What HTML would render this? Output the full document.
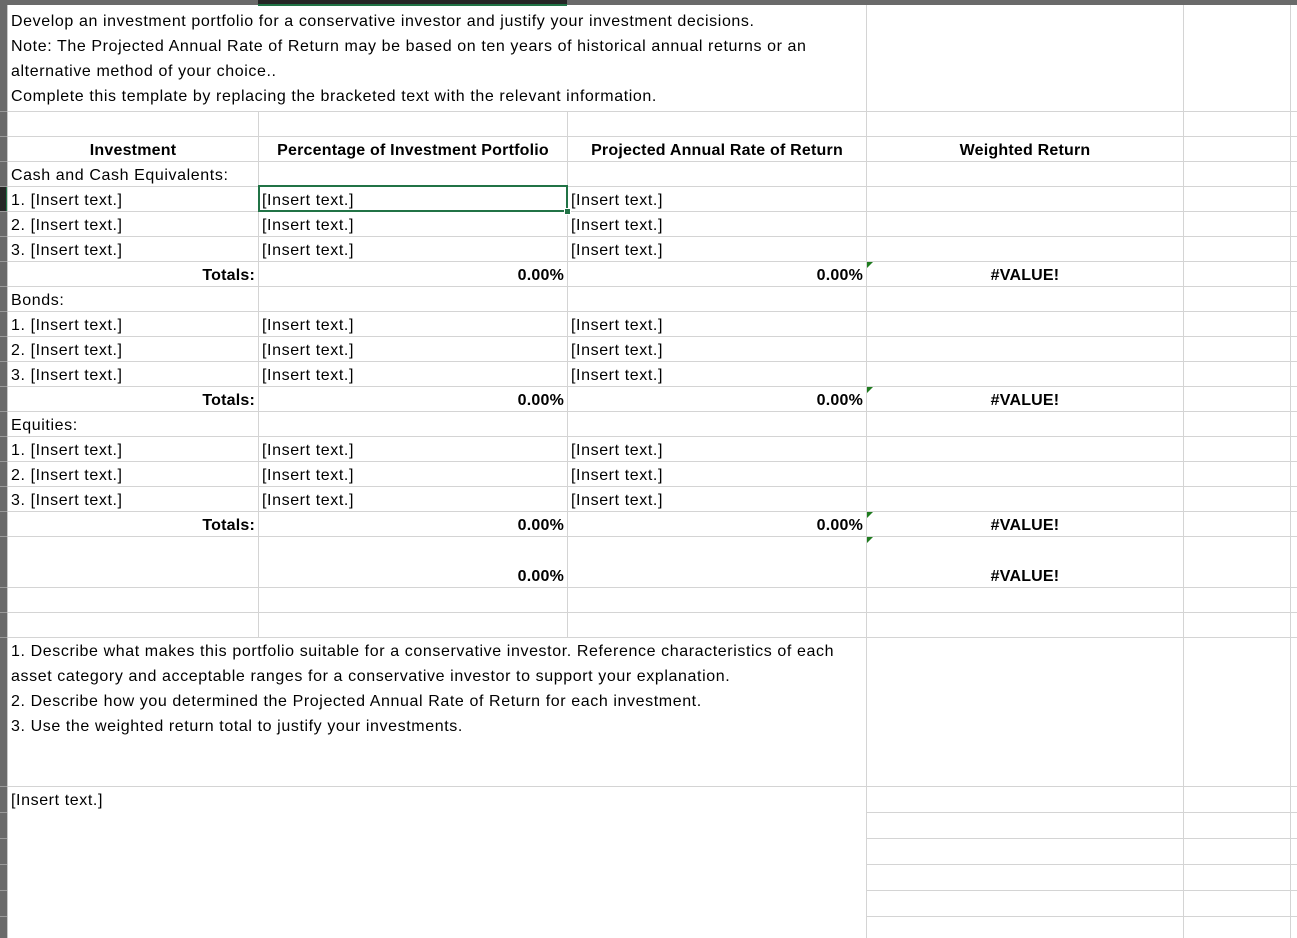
<!DOCTYPE html>
<html><head><meta charset="utf-8"><style>
body{margin:0;width:1297px;height:938px;overflow:hidden;background:#fff;position:relative;font-family:"Liberation Sans",Arial,sans-serif;font-size:16px;letter-spacing:0.6px;color:#000}
.h{position:absolute;height:1px;background:#d4d4d4}
.v{position:absolute;width:1px;background:#d4d4d4}
.t{position:absolute;white-space:nowrap;line-height:25px;height:25px;margin-top:1px}
.b{font-weight:bold;letter-spacing:0.2px}
.r{text-align:right}
.c{text-align:center}
.tri{position:absolute;width:0;height:0;border-top:6px solid #1e7b1e;border-right:6px solid transparent}
.ls{position:absolute;left:0;width:7px;height:1px;background:#9a9a9a}
</style></head><body>
<div style="position:absolute;left:0;top:0;width:1297px;height:5px;background:#6a6a6a"></div>
<div style="position:absolute;left:258px;top:0;width:309px;height:4px;background:#262626"></div>
<div style="position:absolute;left:258px;top:4px;width:309px;height:2px;background:#217346"></div>
<div style="position:absolute;left:0;top:0;width:7px;height:938px;background:#6a6a6a"></div>
<div style="position:absolute;left:0;top:186px;width:7px;height:25px;background:#262626"></div>
<div style="position:absolute;left:6px;top:186px;width:2px;height:25px;background:#217346"></div>
<div style="position:absolute;left:7px;top:5px;width:1px;height:933px;background:#c8c8c8"></div>

<div id="grid"></div>
<script>
var g=document.getElementById('grid'),s='';
[111,136,161,186,211,236,261,286,311,336,361,386,411,436,461,486,511,536,587,612,637,786].forEach(function(y){s+='<div class="h" style="left:8px;top:'+y+'px;width:1289px"></div><div class="ls" style="top:'+y+'px"></div>';});
[812,838,864,890,916].forEach(function(y){s+='<div class="h" style="left:866px;top:'+y+'px;width:431px"></div><div class="ls" style="top:'+y+'px"></div>';});
[866,1183,1290].forEach(function(x){s+='<div class="v" style="left:'+x+'px;top:5px;height:933px"></div>';});
[258,567].forEach(function(x){s+='<div class="v" style="left:'+x+'px;top:111px;height:526px"></div>';});
g.innerHTML=s;
</script>

<div class="t" style="left:11px;top:8px">Develop an investment portfolio for a conservative investor and justify your investment decisions.</div>
<div class="t" style="left:11px;top:33px">Note: The Projected Annual Rate of Return may be based on ten years of historical annual returns or an</div>
<div class="t" style="left:11px;top:58px">alternative method of your choice..</div>
<div class="t" style="left:11px;top:83px">Complete this template by replacing the bracketed text with the relevant information.</div>

<div class="t b c" style="left:8px;width:250px;top:137px">Investment</div>
<div class="t b c" style="left:259px;width:308px;top:137px">Percentage of Investment Portfolio</div>
<div class="t b c" style="left:568px;width:298px;top:137px">Projected Annual Rate of Return</div>
<div class="t b c" style="left:867px;width:316px;top:137px">Weighted Return</div>

<div id="body"></div>
<script>
var b=document.getElementById('body'),h='';
var groups=[[162,'Cash and Cash Equivalents:'],[287,'Bonds:'],[412,'Equities:']];
groups.forEach(function(gr){
 var y=gr[0];
 h+='<div class="t" style="left:11px;top:'+y+'px">'+gr[1]+'</div>';
 for(var i=1;i<=3;i++){var yy=y+25*i;
  h+='<div class="t" style="left:11px;top:'+yy+'px">'+i+'. [Insert text.]</div>';
  h+='<div class="t" style="left:262px;top:'+yy+'px">[Insert text.]</div>';
  h+='<div class="t" style="left:571px;top:'+yy+'px">[Insert text.]</div>';}
 var ty=y+100;
 h+='<div class="t b r" style="left:8px;width:247px;top:'+ty+'px">Totals:</div>';
 h+='<div class="t b r" style="left:259px;width:305px;top:'+ty+'px">0.00%</div>';
 h+='<div class="t b r" style="left:568px;width:295px;top:'+ty+'px">0.00%</div>';
 h+='<div class="t b c" style="left:867px;width:316px;top:'+ty+'px">#VALUE!</div>';
 h+='<div class="tri" style="left:867px;top:'+(ty)+'px"></div>';
});
b.innerHTML=h;
</script>
<div class="tri" style="left:867px;top:537px"></div>
<div class="t b r" style="left:259px;width:305px;top:563px">0.00%</div>
<div class="t b c" style="left:867px;width:316px;top:563px">#VALUE!</div>

<div style="position:absolute;left:258px;top:185px;width:306px;height:23px;border:2px solid #217346"></div>
<div style="position:absolute;left:564px;top:208px;width:5px;height:5px;background:#217346;border:1px solid #fff"></div>

<div class="t" style="left:11px;top:638px">1. Describe what makes this portfolio suitable for a conservative investor. Reference characteristics of each</div>
<div class="t" style="left:11px;top:663px">asset category and acceptable ranges for a conservative investor to support your explanation.</div>
<div class="t" style="left:11px;top:688px">2. Describe how you determined the Projected Annual Rate of Return for each investment.</div>
<div class="t" style="left:11px;top:713px">3. Use the weighted return total to justify your investments.</div>
<div class="t" style="left:11px;top:787px">[Insert text.]</div>
</body></html>
